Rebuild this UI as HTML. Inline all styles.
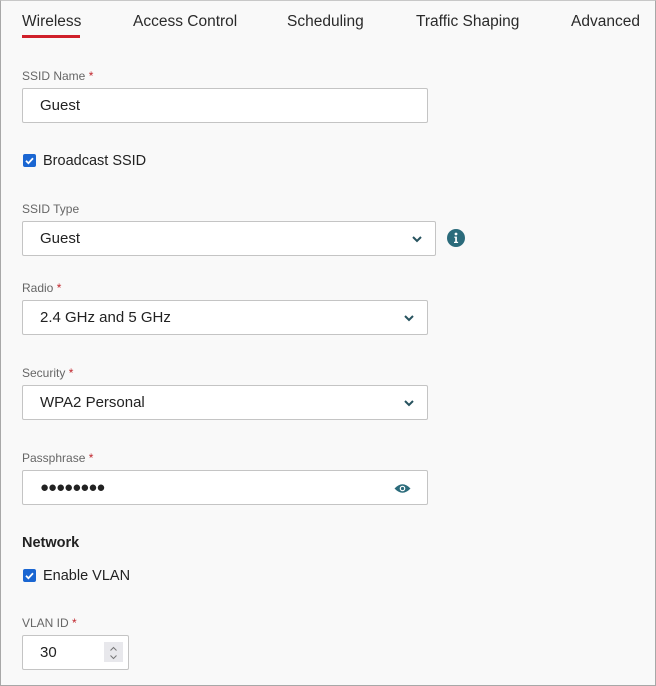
<!DOCTYPE html>
<html><head><style>
*{box-sizing:border-box;margin:0;padding:0}
body{width:656px;height:686px;background:#f9f9f9;font-family:"Liberation Sans",sans-serif;color:#222;position:relative;overflow:hidden}
.frame{position:absolute;left:0;top:0;width:656px;height:686px;border:1px solid #a8a8a8;border-top:1px solid #c8c8c8}
.abs{position:absolute}
.tab{position:absolute;top:13px;font-size:15.5px;color:#2a2a2a}
.lbl{position:absolute;left:22px;font-size:12px;color:#666}
.lbl b{color:#c0262d;font-weight:normal}
.box{position:absolute;left:22px;height:35px;background:#fff;border:1px solid #c4c4c4;border-radius:2px;font-size:15px;padding-left:17px;line-height:34px;color:#222}
.chev{position:absolute;right:12px;top:11px}
.cb{position:absolute;left:23px;width:13px;height:13px;background:#1a66d2;border-radius:2px}
.cbt{position:absolute;left:43px;font-size:14.5px;color:#222}
</style></head><body>
<div class="frame"></div>
<div class="tab" style="left:22px">Wireless</div>
<div class="abs" style="left:22px;top:35px;width:58px;height:3px;background:#d0202a"></div>
<div class="tab" style="left:133px">Access Control</div>
<div class="tab" style="left:287px">Scheduling</div>
<div class="tab" style="left:416px">Traffic Shaping</div>
<div class="tab" style="left:571px">Advanced</div>

<div class="lbl" style="top:69px">SSID Name <b>*</b></div>
<div class="box" style="top:88px;width:406px">Guest</div>

<div class="cb" style="top:154px"><svg width="13" height="13" viewBox="0 0 13 13"><path d="M3 6.8l2.4 2.4L10 4.3" stroke="#fff" stroke-width="1.8" fill="none"/></svg></div>
<div class="cbt" style="top:153px">Broadcast SSID</div>

<div class="lbl" style="top:202px">SSID Type</div>
<div class="box" style="top:221px;width:414px">Guest<svg class="chev" width="12" height="12" viewBox="0 0 12 12"><path d="M2 4l4 4 4-4" stroke="#27535f" stroke-width="2" fill="none"/></svg></div>
<svg class="abs" style="left:447px;top:229px" width="18" height="18" viewBox="0 0 18 18"><circle cx="9" cy="9" r="9" fill="#2b6b7b"/><circle cx="9" cy="5" r="1.4" fill="#fff"/><path d="M7.3 7.6h2.6v5.2h1.2v1.2H7v-1.2h1.2V8.8h-0.9z" fill="#fff"/></svg>

<div class="lbl" style="top:281px">Radio <b>*</b></div>
<div class="box" style="top:300px;width:406px">2.4 GHz and 5 GHz<svg class="chev" width="12" height="12" viewBox="0 0 12 12"><path d="M2 4l4 4 4-4" stroke="#27535f" stroke-width="2" fill="none"/></svg></div>

<div class="lbl" style="top:366px">Security <b>*</b></div>
<div class="box" style="top:385px;width:406px">WPA2 Personal<svg class="chev" width="12" height="12" viewBox="0 0 12 12"><path d="M2 4l4 4 4-4" stroke="#27535f" stroke-width="2" fill="none"/></svg></div>

<div class="lbl" style="top:451px">Passphrase <b>*</b></div>
<div class="box" style="top:470px;width:406px;letter-spacing:-1px;font-size:15px">●●●●●●●●<svg class="chev" style="top:12px;right:16px" width="17" height="11" viewBox="0 0 17 11"><path d="M0.5 5.5Q8.5 -3 16.5 5.5Q8.5 14 0.5 5.5z" fill="#2b6b7b"/><circle cx="8.5" cy="5.5" r="2.8" fill="#fff"/><circle cx="8.5" cy="5.5" r="1.6" fill="#2b6b7b"/></svg></div>

<div class="abs" style="left:22px;top:535px;font-size:14.5px;font-weight:bold;color:#222">Network</div>
<div class="cb" style="top:569px"><svg width="13" height="13" viewBox="0 0 13 13"><path d="M3 6.8l2.4 2.4L10 4.3" stroke="#fff" stroke-width="1.8" fill="none"/></svg></div>
<div class="cbt" style="top:568px">Enable VLAN</div>

<div class="lbl" style="top:616px">VLAN ID <b>*</b></div>
<div class="box" style="top:635px;width:107px">30
<div class="abs" style="left:81px;top:6px;width:19px;height:20px;background:#e8e8ec"><svg width="19" height="20" viewBox="0 0 19 20"><path d="M6.5 7.5l3-3 3 3M6.5 12.5l3 3 3-3" stroke="#777" stroke-width="1" fill="none"/></svg></div></div>
</body></html>
